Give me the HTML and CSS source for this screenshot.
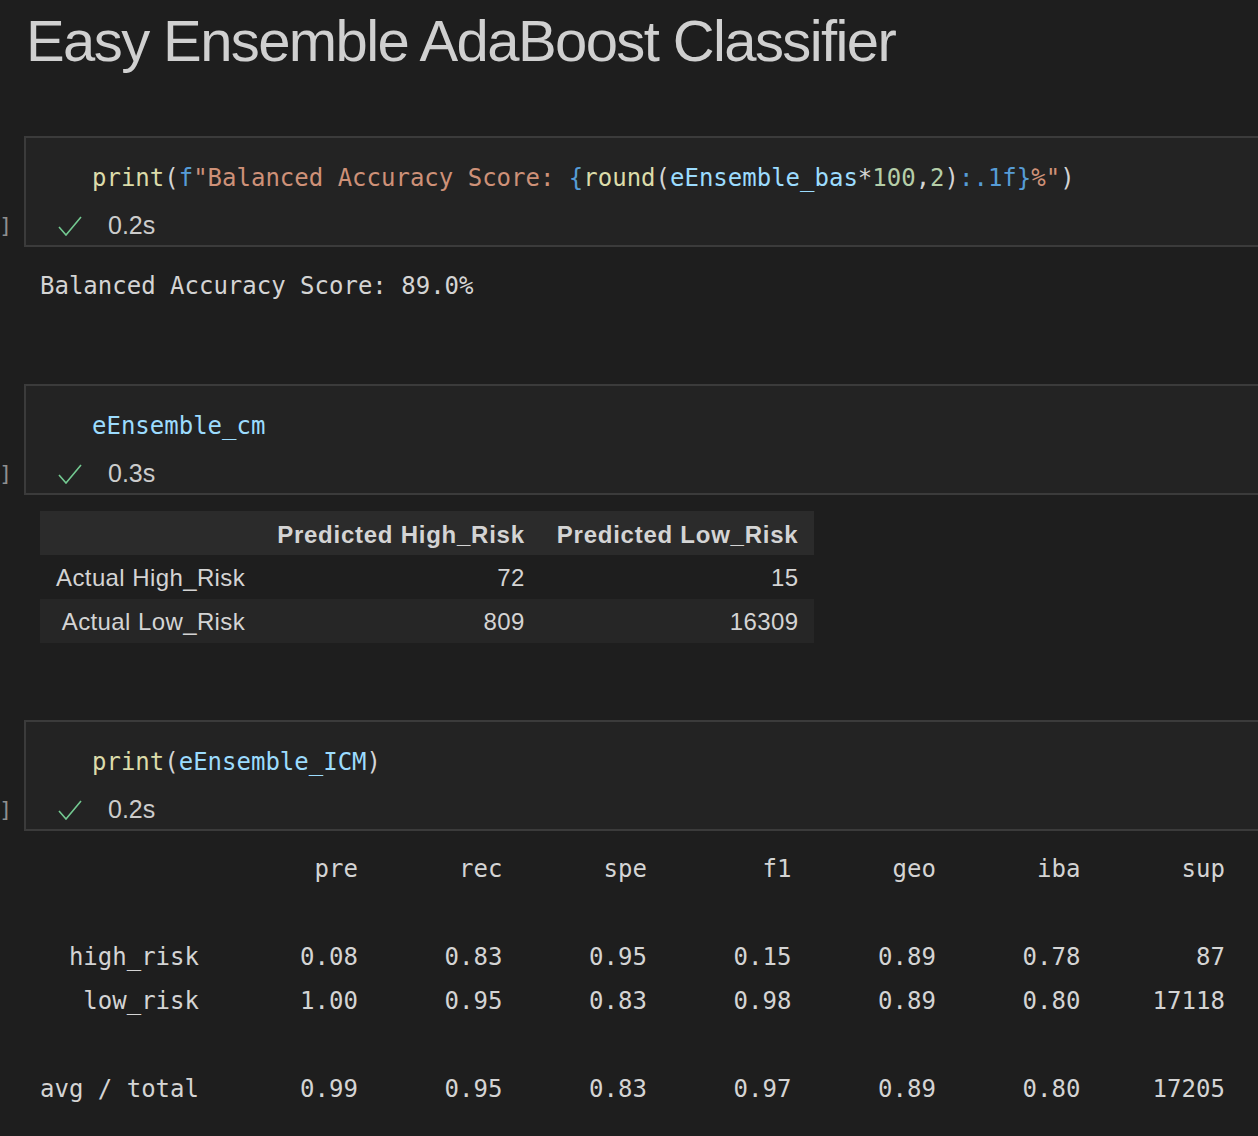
FILE: index.html
```html
<!DOCTYPE html>
<html>
<head>
<meta charset="utf-8">
<link rel="stylesheet" href="styles.css">
</head>
<body>
<div class="notebook">
  <h1 class="title">Easy Ensemble AdaBoost Classifier</h1>

  <div class="cell-row first">
    <div class="gutter"><span class="count">]</span></div>
    <div class="cell">
      <div class="code"><span class="fn">print</span><span class="p">(</span><span class="kw">f</span><span class="str">"Balanced Accuracy Score: </span><span class="kw">{</span><span class="fn">round</span><span class="p">(</span><span class="var">eEnsemble_bas</span><span class="p">*</span><span class="num">100</span><span class="p">,</span><span class="num">2</span><span class="p">)</span><span class="kw">:.1f}</span><span class="str">%"</span><span class="p">)</span></div>
      <div class="status">
        <svg class="check" width="24" height="20" viewBox="0 0 24 20"><polyline points="1,11 8,19 23,1" fill="none" stroke="#73c991" stroke-width="1.6"/></svg>
        <span class="time">0.2s</span>
      </div>
    </div>
  </div>
  <pre class="output text-out">Balanced Accuracy Score: 89.0%</pre>

  <div class="cell-row second">
    <div class="gutter"><span class="count">]</span></div>
    <div class="cell">
      <div class="code"><span class="var">eEnsemble_cm</span></div>
      <div class="status">
        <svg class="check" width="24" height="20" viewBox="0 0 24 20"><polyline points="1,11 8,19 23,1" fill="none" stroke="#73c991" stroke-width="1.6"/></svg>
        <span class="time">0.3s</span>
      </div>
    </div>
  </div>
  <div class="output table-out">
    <table class="df">
      <thead>
        <tr><th></th><th>Predicted High_Risk</th><th>Predicted Low_Risk</th></tr>
      </thead>
      <tbody>
        <tr><th>Actual High_Risk</th><td>72</td><td>15</td></tr>
        <tr><th>Actual Low_Risk</th><td>809</td><td>16309</td></tr>
      </tbody>
    </table>
  </div>

  <div class="cell-row third">
    <div class="gutter"><span class="count">]</span></div>
    <div class="cell">
      <div class="code"><span class="fn">print</span><span class="p">(</span><span class="var">eEnsemble_ICM</span><span class="p">)</span></div>
      <div class="status">
        <svg class="check" width="24" height="20" viewBox="0 0 24 20"><polyline points="1,11 8,19 23,1" fill="none" stroke="#73c991" stroke-width="1.6"/></svg>
        <span class="time">0.2s</span>
      </div>
    </div>
  </div>
  <pre class="output report-out">                   pre       rec       spe        f1       geo       iba       sup

  high_risk       0.08      0.83      0.95      0.15      0.89      0.78        87
   low_risk       1.00      0.95      0.83      0.98      0.89      0.80     17118

avg / total       0.99      0.95      0.83      0.97      0.89      0.80     17205</pre>
</div>
</body>
</html>
```
FILE: styles.css
```css
html, body {
  margin: 0;
  padding: 0;
  background: #1e1e1e;
  overflow: hidden;
}

.notebook {
  width: 1258px;
  height: 1136px;
  overflow: hidden;
  color: #cccccc;
  font-family: "Liberation Sans", Arial, sans-serif;
}

.title {
  margin: 11px 0 0 26px;
  font-size: 58px;
  line-height: 60px;
  font-weight: 400;
  letter-spacing: -1.6px;
  color: #d0d0d0;
}

.cell-row {
  display: flex;
  align-items: stretch;
}

.cell-row.first { margin-top: 65px; }
.cell-row.second { margin-top: 83px; }
.cell-row.third { margin-top: 77px; }

.gutter {
  width: 24px;
  flex: none;
  display: flex;
  align-items: flex-end;
  padding-bottom: 6px;
}

.count {
  font-family: "DejaVu Sans Mono", monospace;
  font-size: 22px;
  line-height: 30px;
  color: #8f8f8f;
  margin-left: -1px;
}

.cell {
  flex: 1;
  background: #232323;
  border: 2px solid #3b3b3b;
  border-right: none;
  padding: 25px 0 5px 66px;
  height: 77px;
}

.code {
  font-family: "DejaVu Sans Mono", Menlo, monospace;
  font-size: 24px;
  line-height: 30px;
  white-space: pre;
  color: #d4d4d4;
}

.fn { color: #dcdcaa; }
.p { color: #d4d4d4; }
.kw { color: #569cd6; }
.str { color: #ce9178; }
.var { color: #9cdcfe; }
.num { color: #b5cea8; }

.status {
  display: flex;
  align-items: center;
  height: 30px;
  margin-top: 17px;
  margin-left: -34px;
}

.check {
  flex: none;
  margin-top: 1px;
}

.time {
  margin-left: 26px;
  font-size: 25px;
  color: #cccccc;
}

.output {
  margin: 0;
  padding-left: 40px;
}

.text-out, .report-out {
  font-family: "DejaVu Sans Mono", Menlo, monospace;
  font-size: 24px;
  color: #d4d4d4;
}

.text-out {
  line-height: 30px;
  margin-top: 24px;
}

.table-out {
  margin-top: 16px;
}

.df {
  border-collapse: collapse;
  font-size: 24px;
  letter-spacing: 0.4px;
  color: #d4d4d4;
}

.df th, .df td {
  height: 42px;
  padding: 2px 16px 0;
  text-align: right;
  white-space: nowrap;
}

.df thead th {
  font-weight: 700;
  background: #2b2b2b;
  letter-spacing: 0.75px;
  height: 41px;
  padding-top: 3px;
}

.df tbody th {
  font-weight: 400;
}

.df tbody tr:nth-child(even) {
  background: #262626;
}

.report-out {
  line-height: 44px;
  margin-top: 16px;
  white-space: pre;
}
```
